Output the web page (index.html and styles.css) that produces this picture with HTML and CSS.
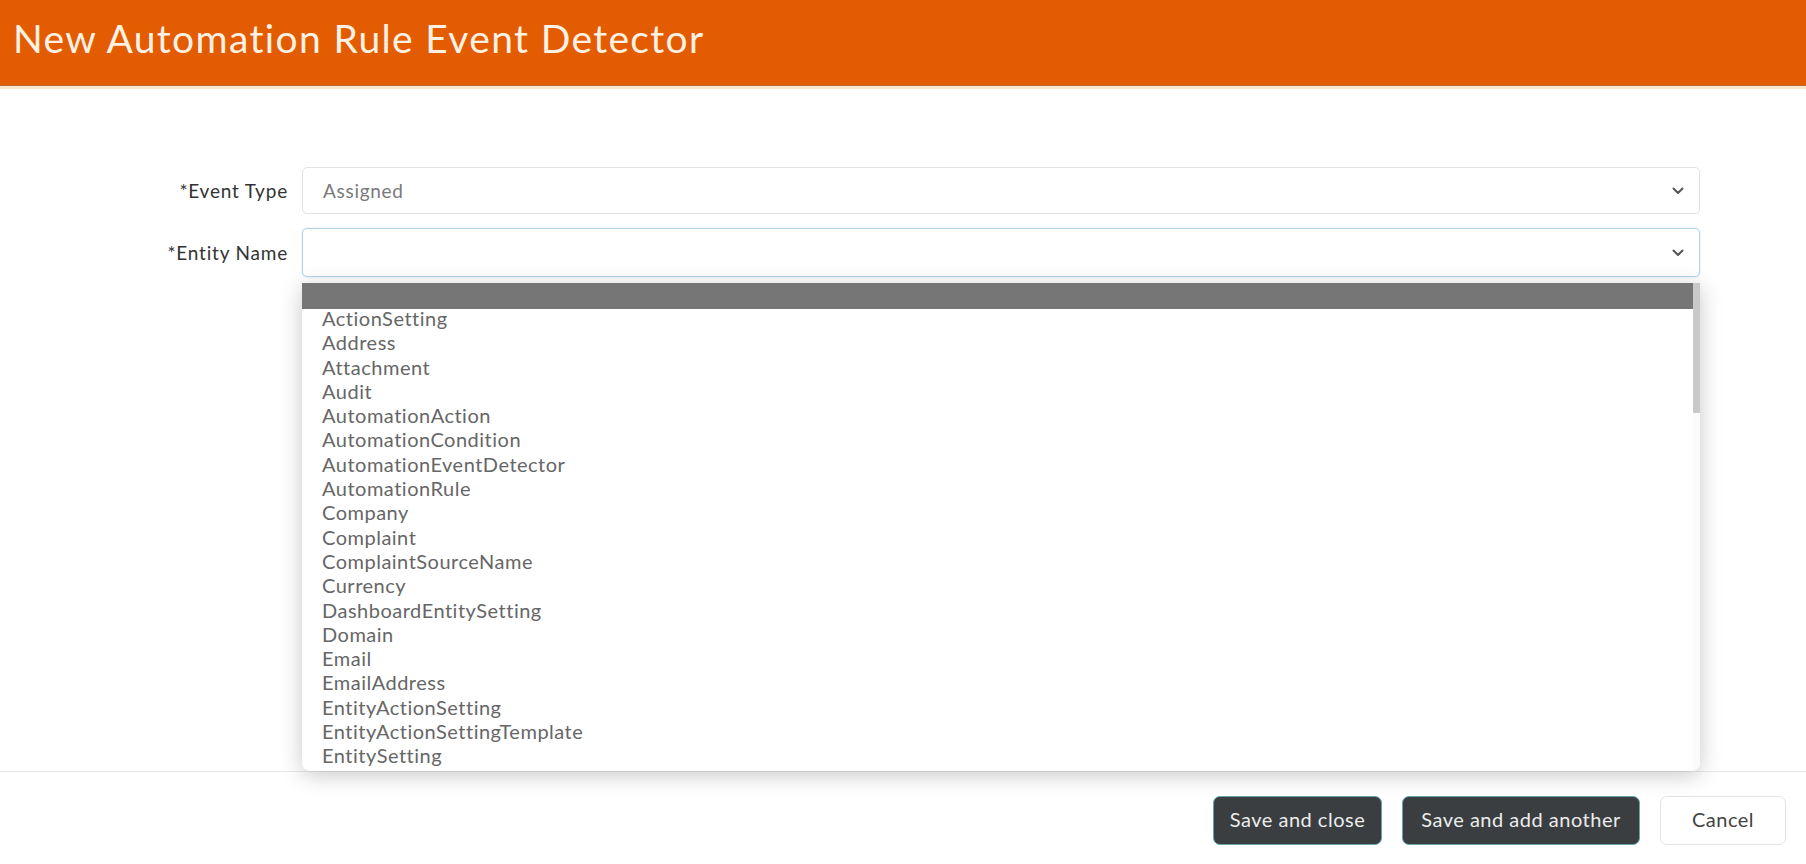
FILE: index.html
```html
<!DOCTYPE html>
<html lang="en">
<head>
<meta charset="utf-8">
<title>New Automation Rule Event Detector</title>
<link rel="stylesheet" href="styles.css">
</head>
<body>
<div class="page">
  <header class="title-bar">
    <h1 class="title">New Automation Rule Event Detector</h1>
  </header>
  <main class="form">
    <div class="form-row">
      <label class="field-label">*Event Type</label>
      <div class="select">
        <span class="select-value">Assigned</span>
        <svg class="chevron" width="12" height="8" viewBox="0 0 12 8"><path d="M1.5 1.5 L6 6 L10.5 1.5" fill="none" stroke="#555" stroke-width="2" stroke-linecap="round" stroke-linejoin="round"/></svg>
      </div>
    </div>
    <div class="form-row">
      <label class="field-label">*Entity Name</label>
      <div class="select select-focus">
        <span class="select-value"></span>
        <svg class="chevron" width="12" height="8" viewBox="0 0 12 8"><path d="M1.5 1.5 L6 6 L10.5 1.5" fill="none" stroke="#555" stroke-width="2" stroke-linecap="round" stroke-linejoin="round"/></svg>
        <div class="dropdown">
          <div class="dropdown-list">
            <div class="option option-selected">&nbsp;</div>
            <div class="option">ActionSetting</div>
            <div class="option">Address</div>
            <div class="option">Attachment</div>
            <div class="option">Audit</div>
            <div class="option">AutomationAction</div>
            <div class="option">AutomationCondition</div>
            <div class="option">AutomationEventDetector</div>
            <div class="option">AutomationRule</div>
            <div class="option">Company</div>
            <div class="option">Complaint</div>
            <div class="option">ComplaintSourceName</div>
            <div class="option">Currency</div>
            <div class="option">DashboardEntitySetting</div>
            <div class="option">Domain</div>
            <div class="option">Email</div>
            <div class="option">EmailAddress</div>
            <div class="option">EntityActionSetting</div>
            <div class="option">EntityActionSettingTemplate</div>
            <div class="option">EntitySetting</div>
          </div>
          <div class="scrollbar"><div class="scroll-thumb"></div></div>
        </div>
      </div>
    </div>
  </main>
  <footer class="actions">
    <button class="btn btn-dark btn-close">Save and close</button>
    <button class="btn btn-dark btn-another">Save and add another</button>
    <button class="btn btn-light btn-cancel">Cancel</button>
  </footer>
</div>
</body>
</html>
```
FILE: styles.css
```css
* { box-sizing: border-box; }
html, body { margin: 0; padding: 0; background: #fff; }
body { font-family: "Lato", "Open Sans", sans-serif; color: #333; }

.page {
  width: 1806px;
  height: 864px;
  display: flex;
  flex-direction: column;
  overflow: hidden;
}

.title-bar {
  height: 89px;
  background: #e35c02;
  border-bottom: 3px solid #fbe4cc;
  box-shadow: inset 0 -1px 0 #b86a3a;
  display: flex;
  align-items: center;
  padding-left: 13px;
  flex-shrink: 0;
}
.title {
  margin: 0 0 11px 0;
  font-weight: 400;
  font-size: 39px;
  color: #fdf1e4;
  letter-spacing: 1.35px;
}

.form {
  flex: 1;
  padding-top: 78px;
  display: flex;
  flex-direction: column;
  gap: 14px;
}
.form-row {
  display: grid;
  grid-template-columns: 288px 1398px;
  column-gap: 14px;
  align-items: center;
}
.field-label {
  text-align: right;
  font-size: 19px;
  letter-spacing: 0.8px;
  color: #333;
}
.select {
  position: relative;
  height: 47px;
  border: 1px solid #e2e2e2;
  border-radius: 5px;
  background: #fff;
  display: flex;
  align-items: center;
  padding: 0 15px 0 20px;
}
.select-focus {
  height: 49px;
  border-color: #b4d3ea;
  box-shadow: 0 0 2px rgba(120, 170, 210, 0.35);
}
.select-value {
  flex: 1;
  font-size: 19px;
  letter-spacing: 0.7px;
  color: #7a7a7a;
}

.dropdown {
  position: absolute;
  top: 54px;
  left: -1px;
  width: 1398px;
  height: 488px;
  background: #fff;
  border-radius: 0 0 8px 8px;
  box-shadow: 0 4px 22px rgba(0, 0, 0, 0.22);
  display: flex;
  overflow: hidden;
  z-index: 10;
}
.dropdown-list { flex: 1; }
.option {
  height: 24.3px;
  line-height: 24.3px;
  padding-left: 20px;
  font-size: 20px;
  letter-spacing: 0.5px;
  color: #666;
  white-space: nowrap;
}
.option-selected {
  height: 26px;
  background: #767676;
  margin-bottom: -3px;
}
.scrollbar {
  width: 7px;
  background: #fbfbfb;
}
.scroll-thumb {
  height: 130px;
  background: #c9c9c9;
}

.actions {
  height: 93px;
  border-top: 1px solid #e8e8e8;
  display: flex;
  justify-content: flex-end;
  align-items: flex-start;
  gap: 20px;
  padding: 24px 20px 0 0;
  flex-shrink: 0;
}
.btn {
  height: 49px;
  border-radius: 7px;
  font-family: "Lato", "Open Sans", sans-serif;
  font-size: 20px;
  letter-spacing: 0.5px;
  padding: 0 0 3px 0;
}
.btn-dark {
  background: #3a3e40;
  border: 1px solid #62a5ad;
  color: #ececec;
}
.btn-light {
  background: #fff;
  border: 1px solid #e3e3e3;
  color: #444;
}
.btn-close { width: 169px; }
.btn-another { width: 238px; }
.btn-cancel { width: 126px; }
```
